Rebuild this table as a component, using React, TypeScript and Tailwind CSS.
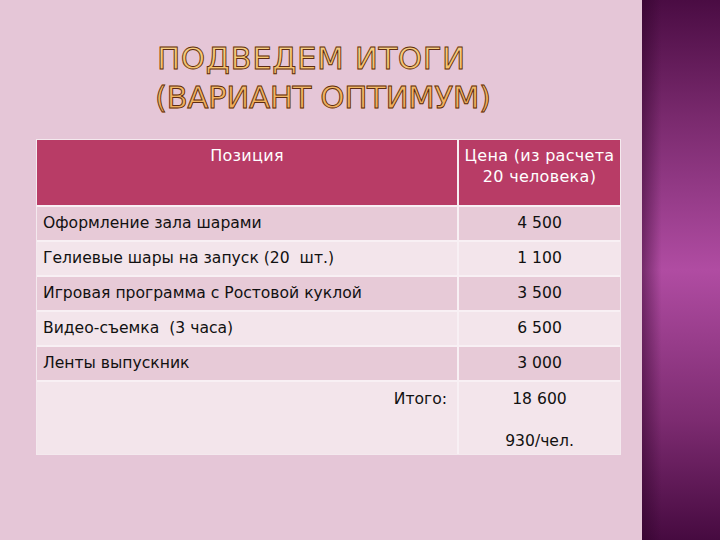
const rows = [
  { name: "Оформление зала шарами", price: "4 500" },
  { name: "Гелиевые шары на запуск (20  шт.)", price: "1 100" },
  { name: "Игровая программа с Ростовой куклой", price: "3 500" },
  { name: "Видео-съемка  (3 часа)", price: "6 500" },
  { name: "Ленты выпускник", price: "3 000" },
];

export default function App() {
  return (
    <div className="flex w-[720px] h-[540px] overflow-hidden bg-[#e5c6d7] font-['DejaVu_Sans',sans-serif]">
      <div className="flex-1 flex flex-col">
        {/* title */}
        <div className="pt-[39px] pl-[155px] flex flex-col items-start text-[31px] leading-[39px] whitespace-pre bg-gradient-to-b from-[#fcebb0] via-[#f6c872] to-[#eea955] bg-clip-text text-transparent [-webkit-text-stroke:0.9px_#5e2c14]">
          <div className="pl-[2px] tracking-[0.5px]">ПОДВЕДЕМ ИТОГИ</div>
          <div className="tracking-[-0.5px]">(ВАРИАНТ ОПТИМУМ)</div>
        </div>

        {/* table */}
        <div className="mt-[22px] ml-[36px] w-[585px] border border-[#f4e9ee] text-[15.6px] text-[#111] whitespace-pre">
          <div className="flex h-[65px] bg-[#b83c66] text-white text-[16px] tracking-[0.3px]">
            <div className="w-[422px] border-r-2 border-[#f6eef2] pt-[5px] text-center leading-[21px]">Позиция</div>
            <div className="flex-1 pt-[5px] text-center leading-[21px]">
              Цена (из расчета
              <br />
              20 человека)
            </div>
          </div>
          {rows.map((r, i) => (
            <div
              key={r.name}
              className={`flex h-[35px] border-t-2 border-[#f8f0f4] ${i % 2 === 0 ? "bg-[#e7cad7]" : "bg-[#f3e5eb]"}`}
            >
              <div className="w-[422px] border-r-2 border-[#f8f0f4] pl-[6px] flex items-center">{r.name}</div>
              <div className="flex-1 flex items-center justify-center">{r.price}</div>
            </div>
          ))}
          <div className="flex h-[74px] border-t-2 border-[#f8f0f4] bg-[#f3e5eb]">
            <div className="w-[422px] border-r-2 border-[#f8f0f4] pr-[10px] pt-[7px] text-right leading-[21px]">Итого:</div>
            <div className="flex-1 pt-[7px] text-center leading-[21px]">
              18 600
              <br />
              <br />
              930/чел.
            </div>
          </div>
        </div>
      </div>

      {/* right decorative band */}
      <div className="w-[78px] h-full bg-[linear-gradient(90deg,rgba(40,0,35,0.45)_0%,rgba(40,0,35,0)_25%),linear-gradient(180deg,#4a0c43_0%,#7a2a6e_22%,#b04ca2_50%,#7c2b70_78%,#460a40_100%)]" />
    </div>
  );
}
